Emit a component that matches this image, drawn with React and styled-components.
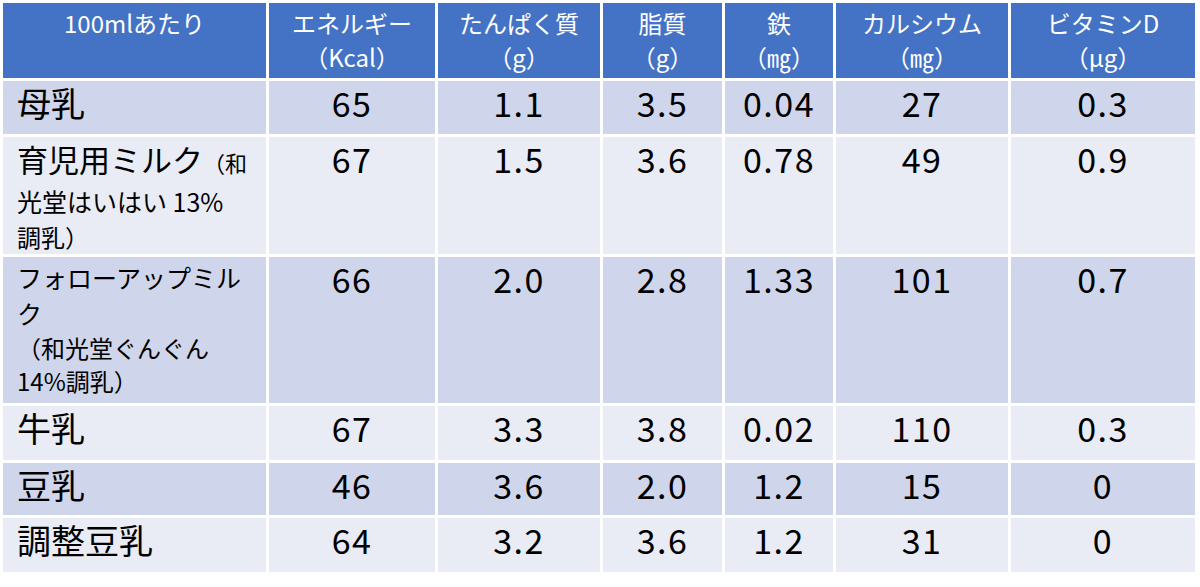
import styled, { createGlobalStyle } from 'styled-components';

const GlobalStyle = createGlobalStyle`
    html, body {
        margin: 0;
        padding: 0;
        background: #ffffff;
    }
    body {
        font-family: "Noto Sans CJK JP", "Noto Sans", sans-serif;
    }
`;

const columns = ['263px', '166px', '162px', '119px', '108px', '172px', '184px'];

const headers = [
    ['100mlあたり'],
    ['エネルギー', '（Kcal）'],
    ['たんぱく質', '（g）'],
    ['脂質', '（g）'],
    ['鉄', '（㎎）'],
    ['カルシウム', '（㎎）'],
    ['ビタミンD', '（μg）'],
];

const rows = [
    {
        height: 53,
        label: [{ text: '母乳', size: 34, lh: 40 }],
        values: ['65', '1.1', '3.5', '0.04', '27', '0.3'],
    },
    {
        height: 117,
        label: [
            { text: '育児用ミルク', size: 31, lh: 40, tail: '（和' },
            { text: '光堂はいはい 13%', size: 25, lh: 38 },
            { text: '調乳）', size: 24, lh: 34 },
        ],
        values: ['67', '1.5', '3.6', '0.78', '49', '0.9'],
    },
    {
        height: 146,
        label: [
            { text: 'フォローアップミル', size: 25, lh: 36 },
            { text: 'ク', size: 25, lh: 36 },
            { text: '（和光堂ぐんぐん', size: 24, lh: 34 },
            { text: '14%調乳）', size: 24, lh: 32 },
        ],
        values: ['66', '2.0', '2.8', '1.33', '101', '0.7'],
    },
    {
        height: 54,
        label: [{ text: '牛乳', size: 34, lh: 40 }],
        values: ['67', '3.3', '3.8', '0.02', '110', '0.3'],
    },
    {
        height: 52,
        label: [{ text: '豆乳', size: 34, lh: 40 }],
        values: ['46', '3.6', '2.0', '1.2', '15', '0'],
    },
    {
        height: 54,
        label: [{ text: '調整豆乳', size: 34, lh: 40 }],
        values: ['64', '3.2', '3.6', '1.2', '31', '0'],
    },
];

export default function App() {
    return (
        <>
            <GlobalStyle />
            <Table>
                {headers.map((lines, i) => (
                    <HeadCell key={i}>
                        {lines.map((l) => <div key={l}>{l}</div>)}
                    </HeadCell>
                ))}

                {rows.map((row, r) => (
                    <Row key={r}>
                        <LabelCell $dark={r % 2 === 0} $h={row.height}>
                            {row.label.map((line, j) => (
                                <Line key={j} $size={line.size} $lh={line.lh}>
                                    {line.text}
                                    {line.tail && <Small>{line.tail}</Small>}
                                </Line>
                            ))}
                        </LabelCell>
                        {row.values.map((v, c) => (
                            <ValueCell key={c} $dark={r % 2 === 0} $h={row.height}>{v}</ValueCell>
                        ))}
                    </Row>
                ))}
            </Table>
        </>
    )
}

const Table = styled.div`
    display: grid;
    grid-template-columns: ${columns.join(' ')};
    gap: 3px;
    padding: 3px;
    width: max-content;
    background: #ffffff;
`;

const HeadCell = styled.div`
    height: 75px;
    box-sizing: border-box;
    padding-top: 3px;
    background: #4472C4;
    color: #ffffff;
    font-size: 24px;
    line-height: 34px;
    text-align: center;
    white-space: nowrap;
`;

const Row = styled.div`
    display: contents;
`;

const Cell = styled.div`
    height: ${(p) => p.$h}px;
    box-sizing: border-box;
    background: ${(p) => (p.$dark ? '#CFD5EA' : '#E9EBF5')};
    color: #000000;
`;

const LabelCell = styled(Cell)`
    padding: 2px 0 0 14px;
`;

const Line = styled.div`
    font-size: ${(p) => p.$size}px;
    line-height: ${(p) => p.$lh}px;
    white-space: nowrap;
`;

const Small = styled.span`
    font-size: 22px;
`;

const ValueCell = styled(Cell)`
    padding-top: 2px;
    font-size: 34px;
    line-height: 40px;
    letter-spacing: 1.5px;
    text-align: center;
`;
